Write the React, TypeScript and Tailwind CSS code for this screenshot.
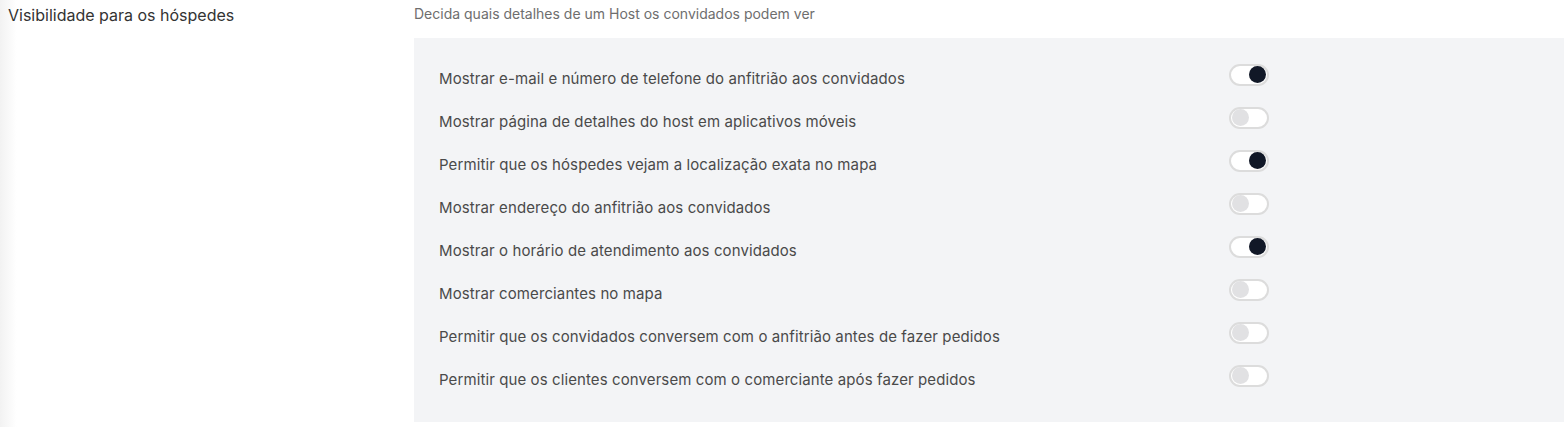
import { useState } from 'react'

const options = [
  { label: 'Mostrar e-mail e número de telefone do anfitrião aos convidados', on: true },
  { label: 'Mostrar página de detalhes do host em aplicativos móveis', on: false },
  { label: 'Permitir que os hóspedes vejam a localização exata no mapa', on: true },
  { label: 'Mostrar endereço do anfitrião aos convidados', on: false },
  { label: 'Mostrar o horário de atendimento aos convidados', on: true },
  { label: 'Mostrar comerciantes no mapa', on: false },
  { label: 'Permitir que os convidados conversem com o anfitrião antes de fazer pedidos', on: false },
  { label: 'Permitir que os clientes conversem com o comerciante após fazer pedidos', on: false },
]

function Toggle({ on, onClick }: { on: boolean; onClick: () => void }) {
  return (
    <button
      onClick={onClick}
      className={`w-[40px] h-[22px] rounded-full border-2 border-[#dcdcdc] bg-white flex items-center px-[1px] ${on ? 'justify-end' : 'justify-start'}`}
    >
      <span className={`w-[17px] h-[17px] rounded-full ${on ? 'bg-[#111827]' : 'bg-[#e1e1e3]'}`} />
    </button>
  )
}

export default function App() {
  const [state, setState] = useState(options.map(o => o.on))

  return (
    <div className="w-[1564px] h-[427px] bg-white font-['Inter',sans-serif] flex">
      <div className="w-[414px] shrink-0 bg-gradient-to-r from-[#f2f2f2] via-white via-[4%] to-white pl-2 pt-[3px]">
        <h2 className="text-[16px] text-[#333333]">Visibilidade para os hóspedes</h2>
      </div>
      <div className="flex-1 pt-[4px]">
        <p className="text-[14px] text-[#6e6e6e] leading-[20px]">Decida quais detalhes de um Host os convidados podem ver</p>
        <div className="mt-[14px] bg-[#f3f4f6] pl-[25px] pt-[15px] pb-[25px]">
          {options.map((o, i) => (
            <div key={i} className="h-[43px] flex items-center">
              <span className="w-[790px] text-[15px] tracking-[0.1px] text-[#4a4a4a] pt-[9px]">{o.label}</span>
              <Toggle on={state[i]} onClick={() => setState(s => s.map((v, j) => (j === i ? !v : v)))} />
            </div>
          ))}
        </div>
      </div>
    </div>
  )
}
